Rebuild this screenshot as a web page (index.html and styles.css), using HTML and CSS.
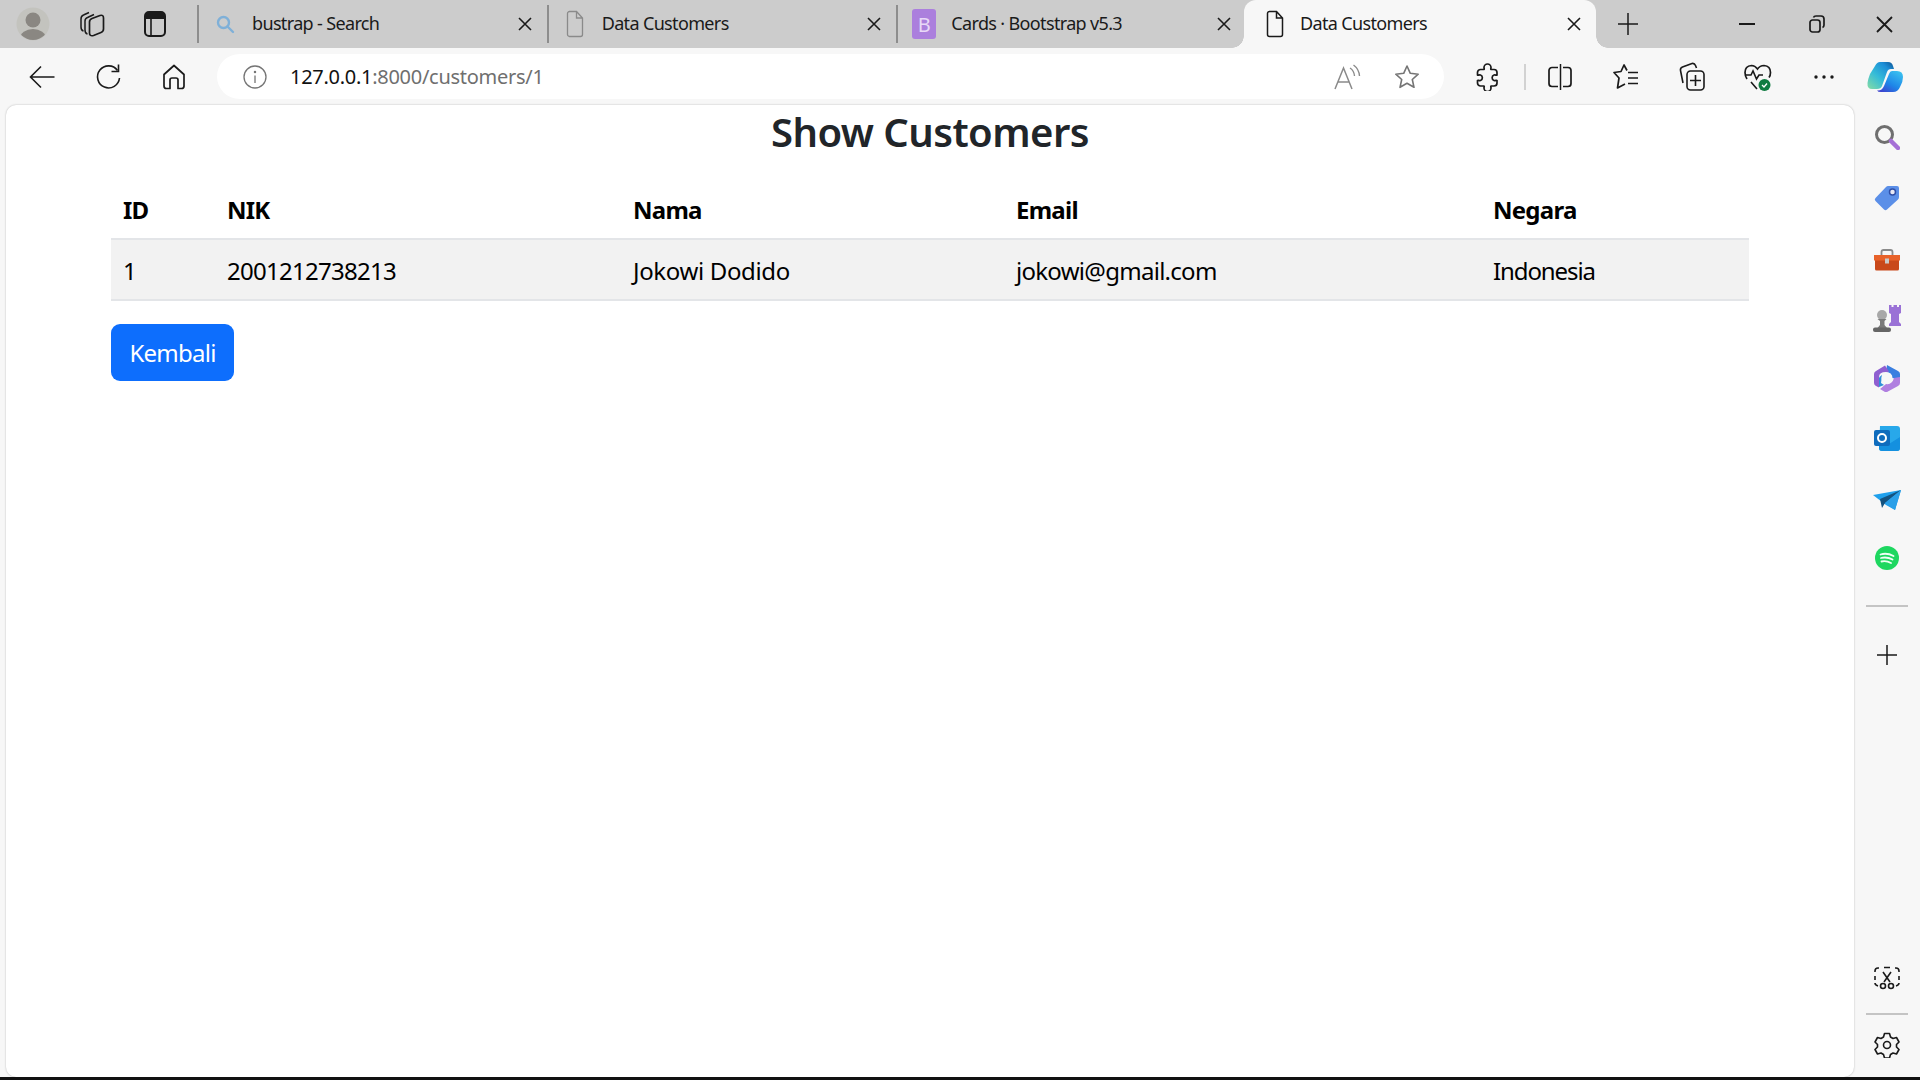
FILE: index.html
```html
<!DOCTYPE html>
<html lang="en">
<head>
<meta charset="utf-8">
<title>Data Customers</title>
<link rel="stylesheet" href="styles.css">
</head>
<body>
<div class="browser">
  <header class="tabstrip">
    <div class="strip-left">
      <div class="avatar"><svg width="34" height="34" viewBox="0 0 34 34"><circle cx="17" cy="17" r="16.5" fill="#c3c3be"/><clipPath id="av"><circle cx="17" cy="17" r="16"/></clipPath><g clip-path="url(#av)" fill="#8a8782"><circle cx="17" cy="13" r="7.5"/><ellipse cx="17" cy="31" rx="13" ry="9"/></g></svg></div>
      <span class="strip-btn"><svg width="26" height="28" viewBox="0 0 26 28" fill="none" stroke="#1a1a1a" stroke-width="1.5" stroke-linejoin="round"><path d="M4.500 21Q2 20.500 2 17V9Q2 6 4.500 5L10 2.500"/><path d="M8.500 24Q6 23.500 6 20V11Q6 8.500 8.500 7.500L15 4.500"/><path d="M10.500 12Q10.500 9.500 13 8.500L21 5.500Q24.500 4.500 24.500 8V19Q24.500 21.500 22 22.500L14.500 25.500Q10.500 26.500 10.500 23z" stroke-width="1.7"/></svg></span>
      <span class="strip-btn tight"><svg width="22" height="26" viewBox="0 0 22 26" fill="none"><rect x="1" y="1" width="20" height="24" rx="4" stroke="#1a1a1a" stroke-width="2"/><path d="M1 8V5a4 4 0 0 1 4-4h12a4 4 0 0 1 4 4v3z" fill="#1a1a1a"/><path d="M7 8v17" stroke="#1a1a1a" stroke-width="1.6"/></svg></span>
    </div>
    <div class="tabs">
      <div class="tab">
        <span class="fav"><svg width="20" height="20" viewBox="0 0 20 20" fill="none" stroke="#7fb0d8" stroke-width="2.4"><circle cx="8.500" cy="8.500" r="5.500"/><path d="M12.500 12.500L18 18" stroke-linecap="round"/></svg></span>
        <span class="tab-title">bustrap - Search</span>
        <span class="tab-x"><svg width="14" height="14" viewBox="0 0 14 14" stroke="#1a1a1a" stroke-width="1.6"><path d="M1 1l12 12M13 1L1 13"/></svg></span>
      </div>
      <div class="tab">
        <span class="fav"><svg width="18" height="28" viewBox="0 0 18 28" fill="none" stroke="#8a8a8a" stroke-width="1.3"><path d="M3 1.500h7.500L16.500 8v16.500a2 2 0 0 1-2 2h-11a2 2 0 0 1-2-2v-21a2 2 0 0 1 2-2zM10.500 1.500V8h6"/></svg></span>
        <span class="tab-title">Data Customers</span>
        <span class="tab-x"><svg width="14" height="14" viewBox="0 0 14 14" stroke="#1a1a1a" stroke-width="1.6"><path d="M1 1l12 12M13 1L1 13"/></svg></span>
      </div>
      <div class="tab">
        <span class="fav"><span class="b-logo">B</span></span>
        <span class="tab-title">Cards · Bootstrap v5.3</span>
        <span class="tab-x"><svg width="14" height="14" viewBox="0 0 14 14" stroke="#1a1a1a" stroke-width="1.6"><path d="M1 1l12 12M13 1L1 13"/></svg></span>
      </div>
      <div class="tab active">
        <span class="fav"><svg width="18" height="28" viewBox="0 0 18 28" fill="none" stroke="#1a1a1a" stroke-width="1.5"><path d="M3 1.500h7.500L16.500 8v16.500a2 2 0 0 1-2 2h-11a2 2 0 0 1-2-2v-21a2 2 0 0 1 2-2zM10.500 1.500V8h6"/></svg></span>
        <span class="tab-title">Data Customers</span>
        <span class="tab-x"><svg width="14" height="14" viewBox="0 0 14 14" stroke="#1a1a1a" stroke-width="1.6"><path d="M1 1l12 12M13 1L1 13"/></svg></span>
      </div>
    </div>
    <span class="new-tab"><svg width="22" height="24" viewBox="0 0 22 24" stroke="#1a1a1a" stroke-width="1.5"><path d="M1 12h20M11 1v22"/></svg></span>
    <div class="win-controls">
      <span class="win-btn"><svg width="16" height="4" viewBox="0 0 16 4" stroke="#1a1a1a" stroke-width="2"><path d="M0 2h16"/></svg></span>
      <span class="win-btn"><svg width="16" height="18" viewBox="0 0 16 18" fill="none" stroke="#1a1a1a" stroke-width="1.7"><rect x="1" y="5" width="10" height="12" rx="2.500"/><path d="M4.500 2.500Q5 1 7 1h5q3 0 3 3v6q0 2-1.500 2.500"/></svg></span>
      <span class="win-btn"><svg width="17" height="17" viewBox="0 0 17 17" stroke="#1a1a1a" stroke-width="1.8"><path d="M1 1l15 15M16 1L1 16"/></svg></span>
    </div>
  </header>

  <nav class="toolbar">
    <div class="nav-btns">
      <span class="tool"><svg width="26" height="24" viewBox="0 0 26 24" fill="none" stroke="#1a1a1a" stroke-width="1.6"><path d="M1.500 12h24M12 1.500L1.500 12 12 22.500"/></svg></span>
      <span class="tool"><svg width="26" height="28" viewBox="0 0 26 28" fill="none" stroke="#1a1a1a" stroke-width="1.6"><path d="M22.500 7.500A11 11 0 1 0 24.500 15"/><path d="M23.500 1.500v7h-7"/></svg></span>
      <span class="tool"><svg width="24" height="26" viewBox="0 0 24 26" fill="none" stroke="#1a1a1a" stroke-width="1.7" stroke-linejoin="round"><path d="M2 10.500L12 1.500l10 9V22a2.500 2.500 0 0 1-2.500 2.500H16V16a2 2 0 0 0-2-2h-4a2 2 0 0 0-2 2v8.500H4.500A2.500 2.500 0 0 1 2 22z"/></svg></span>
    </div>
    <div class="addressbar">
      <span class="info"><svg width="24" height="24" viewBox="0 0 24 24" fill="none" stroke="#757575" stroke-width="1.3"><circle cx="12" cy="12" r="11"/><path d="M12 10.500v7.500"/><circle cx="12" cy="7" r=".6" fill="#757575"/></svg></span>
      <span class="url"><span class="host">127.0.0.1</span>:8000/customers/1</span>
      <span class="addr-icon"><svg width="28" height="26" viewBox="0 0 28 26" fill="none" stroke="#8a8a8a" stroke-width="1.5"><path d="M1 25L9.500 4l8.500 21M4 18h11"/><path d="M16 4q4 2.500 4.500 8M19.500 1q5.500 4 6 11" stroke-width="1.4"/></svg></span>
      <span class="addr-icon"><svg width="26" height="26" viewBox="0 0 26 26" fill="none" stroke="#757575" stroke-width="1.6" stroke-linejoin="round"><path d="M13 2l3.300 7.300 7.900.9-5.900 5.300 1.700 7.800L13 19.300l-7 4 1.700-7.800L1.800 10.200l7.900-.9z"/></svg></span>
    </div>
    <div class="tool-right">
      <span class="tool t-puzzle"><svg width="24" height="28" viewBox="0 0 24 28" fill="none" stroke="#1a1a1a" stroke-width="1.7" stroke-linejoin="round"><path d="M9 4.500a3.500 3.500 0 0 1 7 0c0 1-.5 1.500 0 2h3a3 3 0 0 1 3 3v2.500c-.5.800-1.500-.5-3 0-2.500.800-2.500 4.500 0 5.500 1.500.500 2.500-.8 3 0v2.500a3 3 0 0 1-3 3h-3c-.5.500 0 1 0 2a3.500 3.500 0 0 1-7 0c0-1 .5-1.500 0-2H5.500a3 3 0 0 1-3-3v-2.500c.5-.8 1.500.5 3 0 2.500-1 2.500-4.700 0-5.500-1.500-.5-2.500.8-3 0V9.500a3 3 0 0 1 3-3H9c.5-.5 0-1 0-2z"/></svg></span>
      <span class="tool-sep"></span>
      <span class="tool"><svg width="24" height="26" viewBox="0 0 24 26" fill="none" stroke="#1a1a1a" stroke-width="1.7"><path d="M10 3.500H4a3 3 0 0 0-3 3v13a3 3 0 0 0 3 3h6M15 3.500h5a3 3 0 0 1 3 3v13a3 3 0 0 1-3 3h-5"/><path d="M12.500 0v26" stroke-width="1.5"/></svg></span>
      <span class="tool"><svg width="26" height="28" viewBox="0 0 26 28" fill="none" stroke="#1a1a1a" stroke-width="1.7" stroke-linejoin="round"><path d="M14 7.500L11 2 8 8.500 1 9.500l5 5.500-1.500 10L12 21"/><path d="M15 9.500h10M15 15h10M15 20.500h10"/></svg></span>
      <span class="tool"><svg width="26" height="30" viewBox="0 0 26 30" fill="none" stroke="#1a1a1a" stroke-width="1.6" stroke-linejoin="round"><path d="M4 21L1.500 8.500Q1 6 3.500 5L13 1.500q2.500-.5 3.500 2L17.500 6"/><rect x="8" y="9" width="17" height="19" rx="3.500"/><path d="M16.500 13v11M11 18.500h11"/></svg></span>
      <span class="tool"><svg width="28" height="32" viewBox="0 0 28 32" fill="none"><path d="M3 18Q1 15 1 11.500 1 5 7.500 4.500 11 4.500 13.500 8 16 4.500 20 4.500q6.500.5 6.500 7 0 3-1.500 5" stroke="#1a1a1a" stroke-width="1.7"/><path d="M1.500 14H7l2-4 3.500 8 2.500-4h4M7 21l6 7" stroke="#1a1a1a" stroke-width="1.6"/><circle cx="20.500" cy="24" r="6" fill="#107c41"/><path d="M18 24l2 2 3-3.500" stroke="#fff" stroke-width="1.3"/></svg></span>
      <span class="tool"><svg width="20" height="4" viewBox="0 0 20 4" fill="#1a1a1a"><circle cx="2" cy="2" r="1.7"/><circle cx="10" cy="2" r="1.7"/><circle cx="18" cy="2" r="1.7"/></svg></span>
      <span class="tool t-copilot"><svg width="36" height="32" viewBox="0 0 36 32"><defs><linearGradient id="cp1" x1="0" y1="1" x2=".9" y2="0"><stop offset="0" stop-color="#86dca4"/><stop offset=".45" stop-color="#35bcd8"/><stop offset=".8" stop-color="#1d8fd8"/><stop offset="1" stop-color="#125f9e"/></linearGradient><linearGradient id="cp2" x1=".9" y1="0" x2=".2" y2="1"><stop offset="0" stop-color="#3cc4f0"/><stop offset=".6" stop-color="#1e86e8"/><stop offset="1" stop-color="#3b43cf"/></linearGradient></defs><path d="M13 1H21Q25 1 26 5L27 8H24Q21 8 20 11L15 25Q14 28 10 28H5Q0 28 .5 22 1 18 3 13L8 5Q10 1 13 1z" fill="url(#cp1)"/><path d="M25 10H30Q36 10 36 16 36 21 33 26 31 31 26 31H14Q11 31 10 29.500H11Q15 29.500 17 25L22 13Q23 10 25 10z" fill="url(#cp2)"/></svg></span>
    </div>
  </nav>

  <div class="workspace">
    <main class="page">
      <h1 class="page-title">Show Customers</h1>
      <table class="data-table">
        <colgroup><col class="c-id"><col class="c-nik"><col class="c-nama"><col class="c-email"><col class="c-negara"></colgroup>
        <thead><tr><th>ID</th><th>NIK</th><th>Nama</th><th>Email</th><th>Negara</th></tr></thead>
        <tbody><tr><td>1</td><td>2001212738213</td><td class="cell-name">Jokowi Dodido</td><td>jokowi@gmail.com</td><td class="cell-country">Indonesia</td></tr></tbody>
      </table>
      <a class="btn-back" href="#">Kembali</a>
    </main>
    <aside class="sidebar">
      <span class="side-item first"><svg width="26" height="26" viewBox="0 0 26 26" fill="none"><circle cx="10.500" cy="10.500" r="8" stroke="#6f6f6f" stroke-width="3"/><path d="M17 17l7 7" stroke="#a56fd6" stroke-width="4.5" stroke-linecap="round"/></svg></span>
      <span class="side-item"><svg width="26" height="26" viewBox="0 0 26 26"><path d="M14 1h9q2 0 2 2v9q0 1.500-1 2.500L13 24.500q-1.500 1.500-3 0L1.500 16q-1.500-1.500 0-3L12 2q1-1 2-1z" fill="#5b8fe8"/><circle cx="18.500" cy="7" r="3" fill="#e9e9f5" stroke="#2f4fa8" stroke-width="1.5"/></svg></span>
      <span class="side-item nudge"><svg width="28" height="22" viewBox="0 0 28 22"><path d="M8.500 6V3q0-2 2-2h7q2 0 2 2v3" fill="none" stroke="#8a8a8a" stroke-width="1.8"/><path d="M1 6h26v5l-1 1H2l-1-1z" fill="#e8622a"/><path d="M2 11.500h24V20q0 1.500-1.500 1.500h-21Q2 21.500 2 20z" fill="#c9481a"/><rect x="12" y="9.500" width="4" height="5" fill="#c9c9c9"/></svg></span>
      <span class="side-item"><svg width="28" height="28" viewBox="0 0 28 28"><path d="M16 1h2.500v2h2V1H24v2h2V1h2v8l-2 1v8l2 2v2H16v-2l2-2v-8l-2-1z" fill="#9a72d6"/><circle cx="9" cy="11" r="5" fill="#a8a8a8"/><path d="M4.500 15h9l-2 2v4l2.500 3H4.500L7 21v-4z" fill="#7a7a7a"/><rect x="0" y="23.500" width="18" height="4.500" rx="2" fill="#666"/></svg></span>
      <span class="side-item"><svg width="26" height="28" viewBox="0 0 26 28"><path d="M13 1L24 7q2 1 2 3v5L18 14q0-6-6-6z" fill="#3a7fe0"/><path d="M11 1.500L2 7q-2 1-2 3v9q0 2 2 3l3 1.500V13q0-5 7-5 2 0 3-.5z" fill="#8f5fd0"/><path d="M26 13v6q0 2-2 3l-11 6q-1 .5-2 0l-5-3 6-5q6 1 8-6z" fill="#b07fe0"/><path d="M5 23V14q0-1 3-3l-1 8 3 2z" fill="#2f8fd8"/><circle cx="13" cy="14" r="5.500" fill="#f7f7f7"/></svg></span>
      <span class="side-item"><svg width="26" height="26" viewBox="0 0 26 26"><path d="M6 1h17q3 0 3 3v19q0 3-3 3H8q-3 0-3-3z" fill="#28a8ea"/><path d="M5 14l10 5 11-7v11q0 3-3 3H8q-3 0-3-3z" fill="#1490df"/><rect x="0" y="5" width="16" height="16" rx="2" fill="#0f6cbd"/><circle cx="8" cy="13" r="4" fill="none" stroke="#fff" stroke-width="2"/></svg></span>
      <span class="side-item nudge"><svg width="28" height="20" viewBox="0 0 28 20"><path d="M0 5l28-5-6 20-9-5z" fill="#1fa0ec"/><path d="M28 0L7 9l2 9 3-5z" fill="#14527f"/><path d="M28 0L12 13l10 7z" fill="#2a9fe8"/></svg></span>
      <span class="side-item"><svg width="24" height="24" viewBox="0 0 24 24" fill="none"><circle cx="12" cy="12" r="12" fill="#1ed760"/><path d="M5.500 8.500Q12 6.500 18.500 10M6 12q6-1.500 11.500 1.500M6.500 15.500q5-1 9.500 1.500" stroke="#f0fff5" stroke-width="1.8" stroke-linecap="round"/></svg></span>
      <span class="side-rule"></span>
      <span class="side-item"><svg width="20" height="20" viewBox="0 0 20 20" stroke="#1a1a1a" stroke-width="1.5"><path d="M0 10h20M10 0v20"/></svg></span>
      <span class="side-spacer"></span>
      <span class="side-item"><svg width="26" height="24" viewBox="0 0 26 24" fill="none" stroke="#1a1a1a" stroke-width="1.6"><path d="M5 2h-1q-3 0-3 3v1M10 1.500h6M21 2h1q3 0 3 3v1M1 10v4M25 10v4M1 17q0 2 3 3M25 17q0 2-3 3"/><path d="M9 6l7 10M17 6L10 16"/><circle cx="9" cy="20" r="2.5"/><circle cx="17" cy="20" r="2.5"/></svg></span>
      <span class="side-rule low"></span>
      <span class="side-item gear"><svg width="26" height="26" viewBox="0 0 26 26" fill="none" stroke="#1a1a1a" stroke-width="1.6" stroke-linejoin="round"><circle cx="13" cy="13" r="3.500"/><path d="M10.500 1.500h5l1 3.500 2.500 1.500 3.500-1 2.500 4.500-2.500 2.500v2.500l2.500 2.500-2.500 4.500-3.500-1-2.500 1.500-1 3.500h-5l-1-3.500-2.500-1.500-3.500 1-2.500-4.500 2.500-2.500v-2.500L1 10l2.500-4.500 3.500 1L9.500 5z"/></svg></span>
    </aside>
  </div>
  <div class="taskbar-edge"></div>
</div>
</body>
</html>
```

FILE: styles.css
```css
* { box-sizing: border-box; }
html, body { margin: 0; padding: 0; height: 100%; }
body { overflow: hidden; font-family: "Noto Sans", "Open Sans", "Liberation Sans", sans-serif; color: #212529; }
svg { display: block; }
.browser { width: 1920px; height: 1080px; display: flex; flex-direction: column; background: #f7f7f7; }

/* tab strip */
.tabstrip { height: 48px; flex: none; display: flex; align-items: center; background: #cccccc; }
.strip-left { width: 197px; height: 48px; display: flex; align-items: center; padding-left: 16px; flex: none; }
.avatar { width: 34px; margin-right: 29px; }
.strip-btn { width: 26px; display: flex; justify-content: center; margin-right: 39px; }
.strip-btn.tight { margin-right: 0; width: 22px; }
.tabs { display: flex; height: 48px; flex: none; width: 1399px; }
.tab { position: relative; flex: none; width: 349.67px; height: 48px; display: flex; align-items: center; padding: 0 16px 0 16px; }
.tab::before { content: ""; position: absolute; left: 0; top: 5px; bottom: 5px; width: 2px; background: #8d8d8d; }
.fav { width: 24px; flex: none; margin-right: 15px; display: flex; justify-content: center; }
.tab-title { flex: 1; font-size: 18px; line-height: 24px; margin-top: -2px; letter-spacing: -.65px; color: #1a1a1a; white-space: nowrap; }
.tab-x { flex: none; width: 14px; margin-right: -1px; }
.b-logo { width: 24px; height: 30px; border-radius: 3px; background: #ab7fdd; color: #e8d9f7; font-size: 20px; display: flex; align-items: center; justify-content: center; }
.tab.active { background: #f7f7f7; border-radius: 12px 12px 0 0; margin-left: -2px; width: 352px; padding-left: 19px; }
.tab.active .fav { margin-right: 13px; }
.tab.active::before { left: -12px; top: auto; bottom: 0; width: 12px; height: 12px; background: radial-gradient(circle at 0 0, #cccccc 11.5px, #f7f7f7 12px); }
.tab.active::after { content: ""; position: absolute; right: -12px; bottom: 0; width: 12px; height: 12px; background: radial-gradient(circle at 100% 0, #cccccc 11.5px, #f7f7f7 12px); }
.new-tab { flex: none; width: 22px; margin-left: 21px; }
.win-controls { flex: none; display: flex; align-items: center; gap: 54px; margin-left: 100px; }
.win-btn { flex: none; display: flex; justify-content: center; }
.win-btn:last-child { margin-left: -3px; }

/* toolbar */
.toolbar { height: 57px; flex: none; display: flex; align-items: flex-start; padding-left: 9px; padding-top: 6px; }
.nav-btns { display: flex; width: 208px; flex: none; height: 45px; align-items: center; }
.tool { width: 66px; flex: none; display: flex; justify-content: center; align-items: center; height: 45px; }
.addressbar { width: 1227px; height: 45px; flex: none; background: #fff; border-radius: 23px; display: flex; align-items: center; padding: 0 23px 0 26px; }
.info { width: 24px; flex: none; margin-right: 23px; }
.url { flex: 1; font-size: 20px; letter-spacing: -.28px; color: #6f6f6f; white-space: nowrap; }
.host { color: #111; }
.addr-icon { flex: none; width: 28px; margin-left: 31px; display: flex; justify-content: center; }
.tool-right { flex: 1; display: flex; align-items: center; height: 45px; }
.t-puzzle { width: 43px; margin-left: 21px; }
.tool-sep { width: 2px; height: 26px; background: #d2d2d2; margin: 0 1px 0 16px; flex: none; }
.t-copilot { width: 60px; margin-left: -2px; }

/* workspace */
.workspace { flex: 1; display: flex; min-height: 0; }
.page { width: 1848px; margin-left: 6px; flex: none; background: #fff; border-radius: 10px; box-shadow: 0 0 2px rgba(0,0,0,.28); padding: 0 105px; display: flex; flex-direction: column; align-items: flex-start; }
.page-title { margin: 3px 0 24px; width: 100%; text-align: center; font-size: 40px; line-height: 48px; font-weight: 600; letter-spacing: -.55px; color: #212529; }
.data-table { width: 1638px; table-layout: fixed; border-collapse: collapse; font-size: 24px; color: #000; }
.c-id { width: 104px; } .c-nik { width: 406px; } .c-nama { width: 383px; } .c-email { width: 477px; } .c-negara { width: 268px; }
.data-table th, .data-table td { line-height: 36px; text-align: left; white-space: nowrap; border-bottom: 2px solid #e3e5e8; }
.data-table th { padding: 12px 12px 10px; font-weight: 700; letter-spacing: -.75px; }
.data-table td { padding: 13px 12px 10px; background: #f2f2f2; letter-spacing: -.72px; }
.data-table td.cell-name { letter-spacing: -.35px; }
.data-table td.cell-country { letter-spacing: -1.1px; }
.btn-back { margin-top: 23px; width: 123px; height: 57px; background: #0d6efd; color: #fff; border-radius: 9px; font-size: 24px; letter-spacing: -.75px; text-decoration: none; display: flex; align-items: center; justify-content: center; }

/* sidebar */
.sidebar { flex: 1; display: flex; flex-direction: column; align-items: center; padding: 2px 0 2px; }
.side-item { height: 60px; display: flex; align-items: center; justify-content: center; flex: none; }
.side-item.first { height: 61px; padding-bottom: 2px; }
.side-item.nudge { padding-top: 3px; }
.side-rule { width: 42px; height: 2px; background: #c4c4c4; flex: none; margin: 17px 0 18px; }
.side-rule.low { margin: 5px 0 0; }
.side-spacer { flex: 1; }
.taskbar-edge { height: 3px; flex: none; background: #111; }
```
